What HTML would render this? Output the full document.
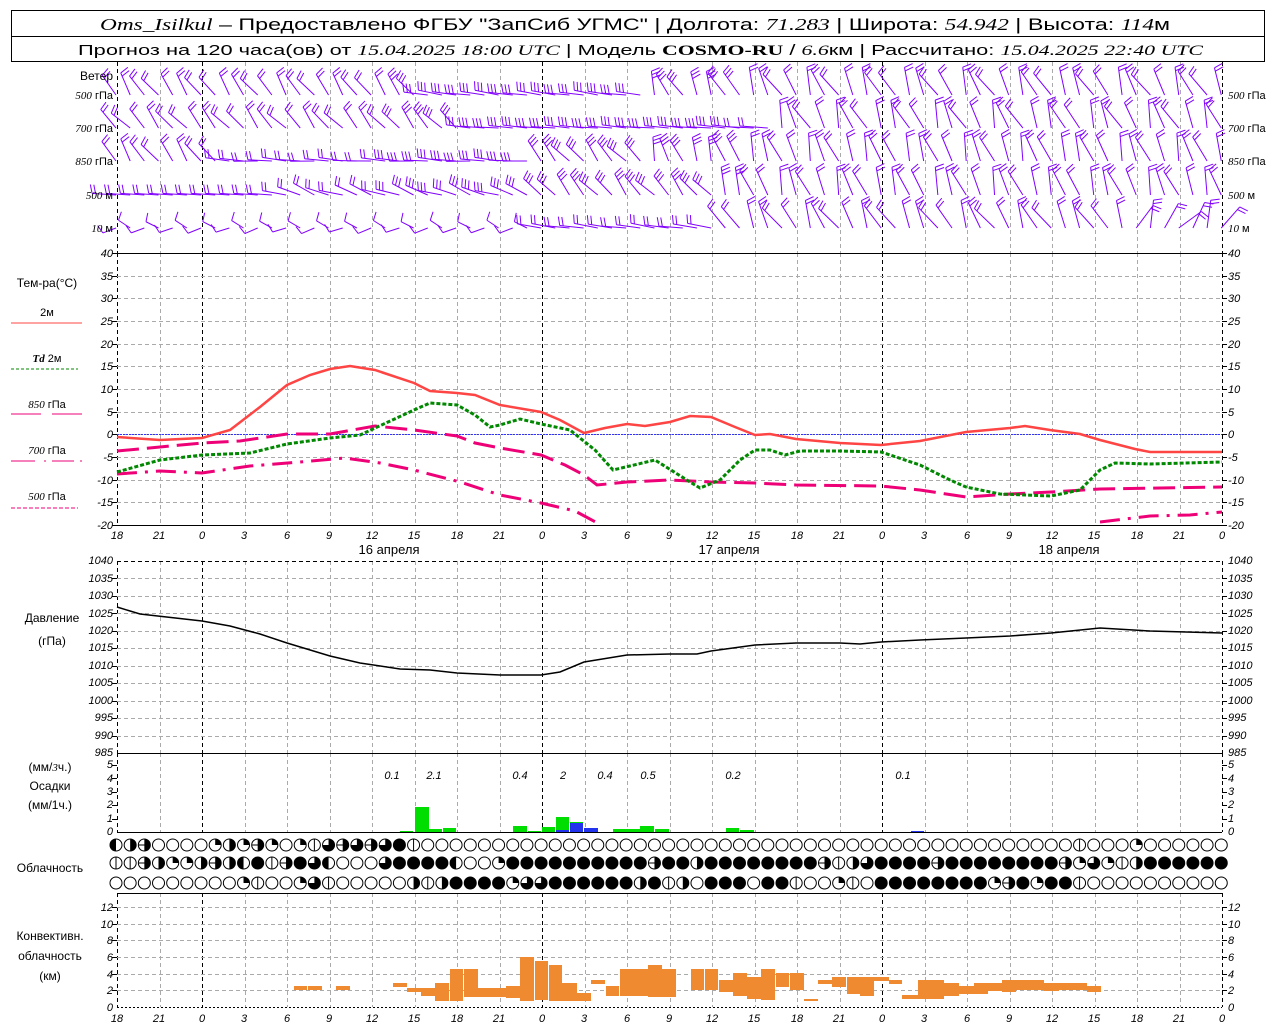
<!DOCTYPE html>
<html><head><meta charset="utf-8"><style>
html,body{margin:0;padding:0;background:#fff;width:1280px;height:1024px;overflow:hidden}
svg{display:block}
text{font-family:"Liberation Sans",sans-serif;fill:#000}
.n{font-family:"Liberation Serif",serif;font-style:italic;font-size:11px}
.l{font-size:12px}
.r{text-anchor:end}
.c{text-anchor:middle}
</style></head><body>
<svg id="s" width="1280" height="1024" viewBox="0 0 1280 1024" xmlns="http://www.w3.org/2000/svg">
<rect x="11.5" y="10.5" width="1253" height="51" fill="none" stroke="#000"/>
<line x1="11" y1="36.5" x2="1265" y2="36.5" stroke="#000"/>
<text x="100" y="30" font-size="17" textLength="1070" lengthAdjust="spacingAndGlyphs"><tspan font-family="Liberation Serif" font-style="italic">Oms_Isilkul</tspan> – Предоставлено ФГБУ "ЗапСиб УГМС" | Долгота: <tspan font-family="Liberation Serif" font-style="italic">71.283</tspan> | Широта: <tspan font-family="Liberation Serif" font-style="italic">54.942</tspan> | Высота: <tspan font-family="Liberation Serif" font-style="italic">114</tspan>м</text>
<text x="78" y="55" font-size="15" textLength="1125" lengthAdjust="spacingAndGlyphs">Прогноз на 120 часа(ов) от <tspan font-family="Liberation Serif" font-style="italic">15.04.2025 18:00 UTC</tspan> | Модель <tspan font-family="Liberation Serif" font-weight="bold">COSMO-RU</tspan> / <tspan font-family="Liberation Serif" font-style="italic">6.6</tspan>км | Рассчитано: <tspan font-family="Liberation Serif" font-style="italic">15.04.2025 22:40 UTC</tspan></text>
<g id="grid"></g>
<g id="wind"></g>
<g id="bars"></g>
<g id="clouds"></g>
<text class="l r" x="113" y="80">Ветер</text>
<text class="r" x="113" y="99" font-size="11"><tspan class="n">500</tspan> гПа</text>
<text class="r" x="113" y="132" font-size="11"><tspan class="n">700</tspan> гПа</text>
<text class="r" x="113" y="165" font-size="11"><tspan class="n">850</tspan> гПа</text>
<text class="r" x="113" y="199" font-size="11"><tspan class="n">500</tspan> м</text>
<text class="r" x="113" y="232" font-size="11"><tspan class="n">10</tspan>  м</text>
<text x="1228" y="99" font-size="11"><tspan class="n">500</tspan> гПа</text>
<text x="1228" y="132" font-size="11"><tspan class="n">700</tspan> гПа</text>
<text x="1228" y="165" font-size="11"><tspan class="n">850</tspan> гПа</text>
<text x="1228" y="199" font-size="11"><tspan class="n">500</tspan> м</text>
<text x="1228" y="232" font-size="11"><tspan class="n">10</tspan>  м</text>
<text class="l c" x="47" y="287">Тем-ра(°C)</text>
<text class="c" x="47" y="316" font-size="11">2м</text>
<line x1="11" y1="323" x2="82" y2="323" stroke="#f44"/>
<text class="c" x="47" y="362" font-size="11"><tspan class="n" font-weight="bold">Td</tspan>  2м</text>
<line x1="11" y1="369" x2="78" y2="369" stroke="#080" stroke-dasharray="3,2"/>
<text class="c" x="47" y="408" font-size="11"><tspan class="n">850</tspan> гПа</text>
<path d="M11 414H41M52 414H82" stroke="#e07" />
<text class="c" x="47" y="454" font-size="11"><tspan class="n">700</tspan> гПа</text>
<path d="M11 461H35M44 461H46M52 461H74M80 461H82" stroke="#e07"/>
<text class="c" x="47" y="500" font-size="11"><tspan class="n">500</tspan> гПа</text>
<line x1="11" y1="508" x2="78" y2="508" stroke="#e07" stroke-dasharray="4,2"/>
<g class="n r">
<text x="113" y="257">40</text><text x="113" y="280">35</text><text x="113" y="302">30</text><text x="113" y="325">25</text><text x="113" y="348">20</text><text x="113" y="370">15</text><text x="113" y="393">10</text><text x="113" y="416">5</text><text x="113" y="438">0</text><text x="113" y="461">-5</text><text x="113" y="484">-10</text><text x="113" y="506">-15</text><text x="113" y="529">-20</text>
</g>
<g class="n">
<text x="1228" y="257">40</text><text x="1228" y="280">35</text><text x="1228" y="302">30</text><text x="1228" y="325">25</text><text x="1228" y="348">20</text><text x="1228" y="370">15</text><text x="1228" y="393">10</text><text x="1228" y="416">5</text><text x="1228" y="438">0</text><text x="1228" y="461">-5</text><text x="1228" y="484">-10</text><text x="1228" y="506">-15</text><text x="1228" y="529">-20</text>
</g>
<g class="n c" font-size="14">
<text x="117" y="539">18</text><text x="159" y="539">21</text><text x="202" y="539">0</text><text x="244" y="539">3</text><text x="287" y="539">6</text><text x="329" y="539">9</text><text x="372" y="539">12</text><text x="414" y="539">15</text><text x="457" y="539">18</text><text x="499" y="539">21</text><text x="542" y="539">0</text><text x="584" y="539">3</text><text x="627" y="539">6</text><text x="669" y="539">9</text><text x="712" y="539">12</text><text x="754" y="539">15</text><text x="797" y="539">18</text><text x="839" y="539">21</text><text x="882" y="539">0</text><text x="924" y="539">3</text><text x="967" y="539">6</text><text x="1009" y="539">9</text><text x="1052" y="539">12</text><text x="1094" y="539">15</text><text x="1137" y="539">18</text><text x="1179" y="539">21</text><text x="1222" y="539">0</text>
</g>
<text class="c" x="389" y="554" font-size="13">16 апреля</text>
<text class="c" x="729" y="554" font-size="13">17 апреля</text>
<text class="c" x="1069" y="554" font-size="13">18 апреля</text>
<text class="l c" x="52" y="622">Давление</text>
<text class="l c" x="52" y="645">(гПа)</text>
<g class="n r" font-size="10">
<text x="113" y="564">1040</text><text x="113" y="582">1035</text><text x="113" y="599">1030</text><text x="113" y="617">1025</text><text x="113" y="634">1020</text><text x="113" y="651">1015</text><text x="113" y="669">1010</text><text x="113" y="686">1005</text><text x="113" y="704">1000</text><text x="113" y="721">995</text><text x="113" y="739">990</text><text x="113" y="756">985</text>
</g>
<g class="n" font-size="10">
<text x="1228" y="564">1040</text><text x="1228" y="582">1035</text><text x="1228" y="599">1030</text><text x="1228" y="617">1025</text><text x="1228" y="634">1020</text><text x="1228" y="651">1015</text><text x="1228" y="669">1010</text><text x="1228" y="686">1005</text><text x="1228" y="704">1000</text><text x="1228" y="721">995</text><text x="1228" y="739">990</text><text x="1228" y="756">985</text>
</g>
<text class="l c" x="50" y="771">(мм/<tspan class="n" font-size="12">3</tspan>ч.)</text>
<text class="l c" x="50" y="790">Осадки</text>
<text class="l c" x="50" y="809">(мм/1ч.)</text>
<g class="n r" font-size="10">
<text x="113" y="768">5</text><text x="113" y="782">4</text><text x="113" y="795">3</text><text x="113" y="808">2</text><text x="113" y="822">1</text><text x="113" y="835">0</text>
</g>
<g class="n" font-size="10">
<text x="1228" y="768">5</text><text x="1228" y="782">4</text><text x="1228" y="795">3</text><text x="1228" y="808">2</text><text x="1228" y="822">1</text><text x="1228" y="835">0</text>
</g>
<g class="n c" font-size="13">
<text x="392" y="779">0.1</text><text x="434" y="779">2.1</text><text x="520" y="779">0.4</text><text x="563" y="779">2</text><text x="605" y="779">0.4</text><text x="648" y="779">0.5</text><text x="733" y="779">0.2</text><text x="903" y="779">0.1</text>
</g>
<text class="l c" x="50" y="872">Облачность</text>
<text class="l c" x="50" y="940">Конвективн.</text>
<text class="l c" x="50" y="960">облачность</text>
<text class="l c" x="50" y="980">(км)</text>
<g class="n r" font-size="10">
<text x="113" y="911">12</text><text x="113" y="928">10</text><text x="113" y="944">8</text><text x="113" y="961">6</text><text x="113" y="978">4</text><text x="113" y="994">2</text><text x="113" y="1011">0</text>
</g>
<g class="n" font-size="10">
<text x="1228" y="911">12</text><text x="1228" y="928">10</text><text x="1228" y="944">8</text><text x="1228" y="961">6</text><text x="1228" y="978">4</text><text x="1228" y="994">2</text><text x="1228" y="1011">0</text>
</g>
<g class="n c" font-size="14">
<text x="117" y="1022">18</text><text x="159" y="1022">21</text><text x="202" y="1022">0</text><text x="244" y="1022">3</text><text x="287" y="1022">6</text><text x="329" y="1022">9</text><text x="372" y="1022">12</text><text x="414" y="1022">15</text><text x="457" y="1022">18</text><text x="499" y="1022">21</text><text x="542" y="1022">0</text><text x="584" y="1022">3</text><text x="627" y="1022">6</text><text x="669" y="1022">9</text><text x="712" y="1022">12</text><text x="754" y="1022">15</text><text x="797" y="1022">18</text><text x="839" y="1022">21</text><text x="882" y="1022">0</text><text x="924" y="1022">3</text><text x="967" y="1022">6</text><text x="1009" y="1022">9</text><text x="1052" y="1022">12</text><text x="1094" y="1022">15</text><text x="1137" y="1022">18</text><text x="1179" y="1022">21</text><text x="1222" y="1022">0</text>
</g>
<line x1="117" y1="434.5" x2="1222" y2="434.5" stroke="#33f" stroke-width="1" stroke-dasharray="2,1"/>
<polyline fill="none" stroke="#f44" stroke-width="2.5" points="117,437 160,440 202,438 230,430 260,407 287,385 310,375 330,369 350,366 375,370 414,383 430,391 457,393 475,395 500,405 541,412 560,420 584,433 605,428 627,424 645,426 670,422 690,416 711,417 735,427 755,435 770,434 796,439 840,443 881,445 920,441 966,432 1010,428 1025,426 1050,430 1080,434 1100,440 1135,449 1150,452 1222,452"/>
<polyline fill="none" stroke="#e07" stroke-width="3" stroke-dasharray="22,8" points="117,451 160,447 202,443 240,441 287,434 330,434 375,426 414,430 457,436 475,443 500,448 541,455 565,465 584,475 597,485 627,482 670,480 711,482 755,483 796,485 881,486 920,490 966,497 1010,494 1051,492 1100,489 1222,487"/>
<polyline fill="none" stroke="#e07" stroke-width="3" stroke-dasharray="20,8,3,8" points="117,474 160,471 202,473 250,466 300,462 345,458 380,463 414,470 460,482 500,495 541,503 575,511 601,525"/>
<polyline fill="none" stroke="#e07" stroke-width="3" stroke-dasharray="20,8,3,8" points="1100,522 1150,516 1190,515 1222,512"/>
<polyline fill="none" stroke="#080" stroke-width="3" stroke-dasharray="4,2" points="117,472 160,460 202,455 250,453 287,444 330,438 360,435 414,410 430,403 457,405 475,415 490,427 500,425 520,419 541,424 570,430 595,450 613,470 655,460 690,482 700,488 720,480 740,460 755,450 770,450 785,455 800,451 840,451 881,452 920,465 950,480 966,487 1000,494 1051,496 1080,490 1100,470 1115,463 1150,464 1222,462"/>
<polyline fill="none" stroke="#000" stroke-width="1.5" points="117,607 140,614 202,621 230,626 260,634 287,643 330,656 360,663 400,669 430,670 457,673 500,675 541,675 560,672 584,662 627,655 670,654 697,654 711,651 755,645 796,643 840,643 860,644 881,642 920,640 966,638 1010,636 1051,633 1100,628 1150,631 1222,633"/>
</svg>
<script>
var S="http://www.w3.org/2000/svg";
function el(g,t,a){var e=document.createElementNS(S,t);for(var k in a)e.setAttribute(k,a[k]);document.getElementById(g).appendChild(e);return e;}
function L(g,x1,y1,x2,y2,c,w,d){var a={x1:x1,y1:y1,x2:x2,y2:y2,stroke:c,"stroke-width":w||1};if(d)a["stroke-dasharray"]=d;el(g,"line",a);}
var X=[];for(var i=0;i<27;i++)X.push(117+i*42.5);
var panels=[[62,253],[253,525],[561,753],[753,832],[893,1007]];
X.forEach(function(x,i){var day=(i%8==2);var xx=Math.round(x)+0.5;
 panels.forEach(function(p){L("grid",xx,p[0],xx,p[1],day||i==0||i==26?"#000":"#aaa",1,"4,3");});});
for(var t=1;t<=12;t++){var y=Math.round(253+t*22.67)+0.5;L("grid",117,y,1222,y,"#aaa",1,"4,3");L("grid",112,y,117,y,"#000");L("grid",1222,y,1227,y,"#000");}
for(var p=1;p<11;p++){var y=Math.round(561+p*17.45)+0.5;L("grid",117,y,1222,y,"#aaa",1,"4,3");L("grid",112,y,117,y,"#000");L("grid",1222,y,1227,y,"#000");}
for(var p=1;p<=6;p++){var y=Math.round(1007-p*16.7)+0.5;L("grid",117,y,1222,y,"#aaa",1,"4,3");L("grid",112,y,117,y,"#000");L("grid",1222,y,1227,y,"#000");}
for(var p=1;p<=5;p++){var y=Math.round(832-p*13.4)+0.5;L("grid",112,y,117,y,"#000");L("grid",1222,y,1227,y,"#000");}
L("grid",117,253.5,1222,253.5,"#000");L("grid",112,253.5,117,253.5,"#000");L("grid",1222,253.5,1227,253.5,"#000");
L("grid",117,525.5,1222,525.5,"#000");
L("grid",117,561.5,1222,561.5,"#000",1,"4,3");
L("grid",117,753.5,1222,753.5,"#000");L("grid",117,832.5,1222,832.5,"#000");
L("grid",117,893.5,1222,893.5,"#000");L("grid",117,1007.5,1222,1007.5,"#000",1,"2,2");
var rowY=[95,128,161,195,228],C="#8000ff";
function ang(r,i){var n=Math.sin(i*1.7+r*3.1)*12;
 if(r==0){if(i<22)return -125+n;if(i<38)return -172+n*0.3;return -115+n*1.5;}
 if(r==1){if(i<25)return -130+n;if(i<47)return -175+n*0.2;return -112+n*1.5;}
 if(r==2){if(i<8)return -125+n;if(i<30)return -176+n*0.4;if(i<38)return -130+n;return -108+n*1.2;}
 if(r==3){if(i<12)return -176;if(i<30)return -160+n*0.8;if(i<43)return -130+n;return -108+n*1.2;}
 if(r==4){if(i<30)return (i%2?-150:-200)+n*0.3;if(i<43)return -172+n*0.3;if(i<72)return -118+n*1.5;return -60+n*2;}}
for(var r=0;r<5;r++)for(var i=0;i<79;i++){
 var x=116+i*14.17,y=rowY[r],a=ang(r,i)*Math.PI/180,Ln=(r==4&&i<30)?14:(i>=43?28:24);
 var ex=x+Ln*Math.cos(a),ey=y+Ln*Math.sin(a);L("wind",x,y,ex,ey,C,1);
 var nf=(i>=20&&i<45&&r<4)?3:(r==4&&i<30?1:2);
 for(var f=0;f<nf;f++){var px=ex-f*3.5*Math.cos(a),py=ey-f*3.5*Math.sin(a),b=a+Math.PI/2.4;
  var fl=9;L("wind",px,py,px+fl*Math.cos(b),py+fl*Math.sin(b),C,1);}}
function R(x1,x2,y1,y2,c){el("bars","rect",{x:x1,y:y1,width:x2-x1,height:y2-y1,fill:c});}
var G="#0d0",B="#23e";
[[400,413,831],[415,429,807],[429,442,829],[443,456,828],[513,527,826],[528,541,831],[542,555,827],[556,569,817],[570,583,822],[613,640,829],[640,654,826],[655,669,829],[726,739,828],[740,754,830]].forEach(function(b){R(b[0],b[1],b[2],832,G);});
[[556,569,830],[570,583,823],[584,598,828],[911,924,831]].forEach(function(b){R(b[0],b[1],b[2],832,B);});
var O="#ef8a30";
[[294,307,986,990],[308,322,986,990],[336,350,986,990],[393,407,983,987],[407,421,988,992],[421,435,988,996],[435,449,983,1001],[450,463,969,1001],[464,478,969,997],[478,506,988,997],[506,520,986,998],[520,534,957,1001],[535,548,961,1000],[549,562,965,1001],[562,577,983,1001],[577,591,993,1001],[591,605,980,984],[606,619,986,996],[620,648,969,996],[648,662,965,997],[662,676,969,997],[691,704,969,990],[705,718,969,990],[719,733,980,992],[733,747,973,996],[747,761,977,999],[761,775,969,1000],[776,789,973,987],[790,804,973,990],[804,818,999,1001],[818,832,980,984],[832,846,977,987],[847,860,977,994],[860,874,977,996],[874,889,977,981],[889,902,980,984],[902,918,995,999],[918,944,980,999],[944,959,983,996],[959,974,986,994],[974,988,983,994],[988,1002,983,991],[1002,1016,980,992],[1016,1030,980,990],[1030,1044,980,990],[1044,1059,983,991],[1059,1073,983,990],[1073,1087,983,990],[1087,1101,986,992]].forEach(function(b){R(b[0],b[1],b[2],b[3],O);});
function rep(c,n){return new Array(n+1).join(c);}
var rows=[
"lreooooqrqeqoqvtetetbv"+rep("o",46)+"v"+"ooo"+"q"+"oooooo",
"vverqqrerlbvebtloootbbbblooqbbbbbbbbbbebbrbbbbbbbbevrtbbbbebbbbbbbbeqtqvrbbbbbbb",
"ooooooooo"+"qvooqtv"+"ooooo"+"rvr"+"bbbb"+"qtt"+"bbbbbb"+"rbvrobbbobbvooqvo"+"bbbbbbbb"+"qebqbbv"+"oooooooooo"];
var rY=[845,863,883];
for(var r=0;r<3;r++)for(var i=0;i<79;i++){
 var cx=116+i*14.17,cy=rY[r],c=rows[r][i]||"o",rr=6;
 el("clouds","circle",{cx:cx,cy:cy,r:rr,fill:c=="b"?"#000":"#fff",stroke:"#000","stroke-width":1});
 if(c=="l")el("clouds","path",{d:"M"+cx+" "+(cy-rr)+"A"+rr+" "+rr+" 0 0 0 "+cx+" "+(cy+rr)+"Z",fill:"#000"});
 if(c=="r")el("clouds","path",{d:"M"+cx+" "+(cy-rr)+"A"+rr+" "+rr+" 0 0 1 "+cx+" "+(cy+rr)+"Z",fill:"#000"});
 if(c=="q")el("clouds","path",{d:"M"+cx+" "+cy+"V"+(cy-rr)+"A"+rr+" "+rr+" 0 0 1 "+(cx+rr)+" "+cy+"Z",fill:"#000"});
 if(c=="t")el("clouds","path",{d:"M"+cx+" "+cy+"V"+(cy-rr)+"A"+rr+" "+rr+" 0 1 1 "+(cx-rr)+" "+cy+"Z",fill:"#000"});
 if(c=="v")L("clouds",cx,cy-rr,cx,cy+rr,"#000",1);
 if(c=="e"){L("clouds",cx-rr,cy,cx+rr,cy,"#000",1);el("clouds","path",{d:"M"+cx+" "+(cy-rr)+"A"+rr+" "+rr+" 0 0 1 "+cx+" "+(cy+rr)+"Z",fill:"#000"});}
}
</script>
</body></html>
